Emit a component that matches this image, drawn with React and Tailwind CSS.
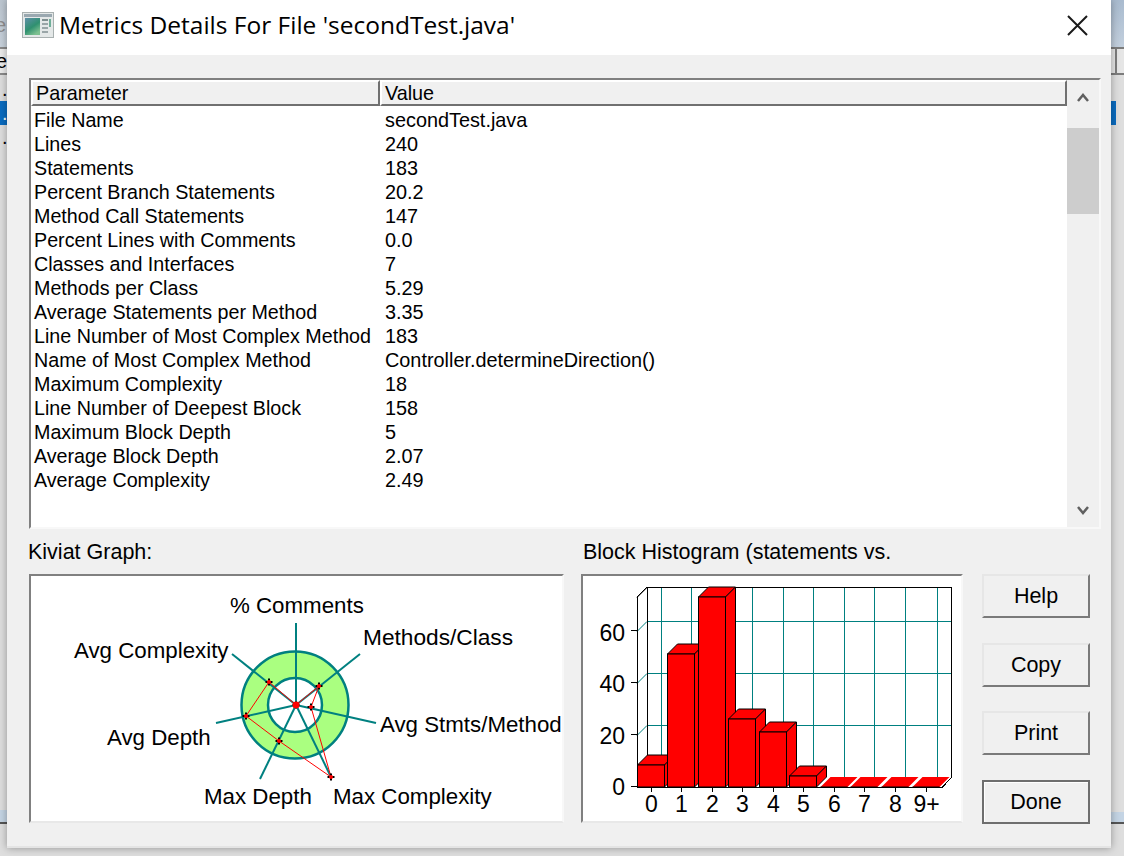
const ROWS = [
  ['File Name', 'secondTest.java'],
  ['Lines', '240'],
  ['Statements', '183'],
  ['Percent Branch Statements', '20.2'],
  ['Method Call Statements', '147'],
  ['Percent Lines with Comments', '0.0'],
  ['Classes and Interfaces', '7'],
  ['Methods per Class', '5.29'],
  ['Average Statements per Method', '3.35'],
  ['Line Number of Most Complex Method', '183'],
  ['Name of Most Complex Method', 'Controller.determineDirection()'],
  ['Maximum Complexity', '18'],
  ['Line Number of Deepest Block', '158'],
  ['Maximum Block Depth', '5'],
  ['Average Block Depth', '2.07'],
  ['Average Complexity', '2.49'],
];

const SPOKES = [[296, 623], [360, 654], [376, 723], [331, 777], [260, 779], [216, 723], [232, 654]];
const POINTS = [[296, 705], [319, 686], [311, 707], [331, 777], [279, 741], [246, 716], [269, 682]];
const KIVIAT_LABELS = [
  ['% Comments', 230, 613],
  ['Methods/Class', 363, 645, 22.7],
  ['Avg Stmts/Method', 380, 732],
  ['Max Complexity', 333, 804],
  ['Max Depth', 204, 804],
  ['Avg Depth', 107, 745],
  ['Avg Complexity', 74, 658],
];

const BARS = [
  { label: '0', x: 637.5, top: 765 },
  { label: '1', x: 667.5, top: 654 },
  { label: '2', x: 698.5, top: 597 },
  { label: '3', x: 728.5, top: 719 },
  { label: '4', x: 759.5, top: 732 },
  { label: '5', x: 789.5, top: 776 },
  { label: '6', x: 820.5, top: 787 },
  { label: '7', x: 850.5, top: 787 },
  { label: '8', x: 881.5, top: 787 },
  { label: '9+', x: 912.5, top: 787 },
];
const GRID_X = [661, 691, 752, 783, 813, 844, 874, 905, 937];
const GRID_Y = [621.5, 673.5, 725.5];
const TICKS = [['60', 631, 641], ['40', 683, 692], ['20', 735, 743.5], ['0', 787, 795]];

const FONT = { fontFamily: '"Liberation Sans", Arial, sans-serif' };

function WindowIcon() {
  return (
    <svg width="32" height="26" viewBox="0 0 32 26">
      <defs>
        <linearGradient id="pane" x1="0" y1="0" x2="0.6" y2="1">
          <stop offset="0" stopColor="#5f8fa8" />
          <stop offset="0.6" stopColor="#2f9070" />
          <stop offset="1" stopColor="#7cc090" />
        </linearGradient>
      </defs>
      <rect x="0.5" y="0.5" width="31" height="25" fill="#e4e8e8" stroke="#a8b0b0" />
      <rect x="2" y="2" width="28" height="3" fill="#9aa8b0" />
      <rect x="3" y="6" width="15" height="17" fill="url(#pane)" />
      <rect x="20" y="7" width="6" height="2" fill="#7f8f90" />
      <rect x="20" y="11" width="6" height="2" fill="#9aa6a8" />
      <rect x="20" y="15" width="6" height="2" fill="#9aa6a8" />
      <rect x="20" y="19" width="6" height="2" fill="#9aa6a8" />
      <rect x="27" y="7" width="2" height="8" fill="#6fae98" />
    </svg>
  );
}

function KiviatGraph() {
  return (
    <svg className="block" width="531" height="245" viewBox="31 576 531 245">
      <circle cx="295" cy="705" r="53.5" fill="#aaff80" stroke="#008080" strokeWidth="2.5" />
      <circle cx="295" cy="705" r="27" fill="#ffffff" stroke="#008080" strokeWidth="2.5" />
      {SPOKES.map(([x, y]) => (
        <line key={x} x1="296" y1="705" x2={x} y2={y} stroke="#008080" strokeWidth="2" />
      ))}
      <polygon points={POINTS.map(p => p.join(',')).join(' ')} fill="none" stroke="#ff0000" strokeWidth="1" />
      {POINTS.map(([x, y]) => (
        <g key={x}>
          <path d={`M${x - 3.5} ${y}H${x + 3.5}M${x} ${y - 3.5}V${y + 3.5}`} stroke="#000000" strokeWidth="2" />
          <circle cx={x} cy={y} r="2" fill="#ff0000" />
        </g>
      ))}
      <circle cx="296" cy="705" r="3.5" fill="#ff0000" />
      {KIVIAT_LABELS.map(([text, x, y, size]) => (
        <text key={text} x={x} y={y} fontSize={size || 22.3} fill="#000000" style={FONT}>{text}</text>
      ))}
    </svg>
  );
}

function Histogram() {
  return (
    <svg className="block" width="378" height="245" viewBox="583 576 378 245" shapeRendering="crispEdges">
      {GRID_X.map(x => <line key={x} x1={x} y1="587" x2={x} y2="777" stroke="#008080" />)}
      {GRID_Y.map(y => <line key={y} x1="647" y1={y} x2="951" y2={y} stroke="#008080" />)}
      {GRID_Y.map(y => <line key={y} x1="637" y1={y + 10} x2="647" y2={y} stroke="#008080" shapeRendering="auto" />)}
      <path d="M647 587.5H951.5V777M647 587V777M637 597L647 587M637 787.5H942L952 777M637 597V787" fill="none" stroke="#000000" />
      <path d="M637 597.5L647 587.5" stroke="#000000" shapeRendering="auto" />
      {BARS.map(({ label, x, top }) => {
        const w = 27;
        const flat = top === 787;
        const d = 10;
        return (
          <g key={label} shapeRendering="auto">
            <polygon
              points={`${x},${top} ${x + d},${top - d} ${x + w + d},${top - d} ${x + w},${top}`}
              fill="#ff0000"
              stroke={flat ? 'none' : '#000000'}
            />
            {!flat && (
              <>
                <polygon
                  points={`${x + w},${top} ${x + w + d},${top - d} ${x + w + d},777 ${x + w},787`}
                  fill="#ff0000"
                  stroke="#000000"
                />
                <rect x={x} y={top} width={w} height={787 - top} fill="#ff0000" stroke="#000000" />
              </>
            )}
            {flat && <line x1={x} y1="787" x2={x + w} y2="787" stroke="#000000" />}
          </g>
        );
      })}
      {TICKS.map(([text, y]) => (
        <line key={text} x1="631" y1={y - 0.5} x2="637" y2={y - 0.5} stroke="#000000" />
      ))}
      {BARS.map(({ x }) => (
        <line key={x} x1={x + 13.5} y1="787" x2={x + 13.5} y2="792" stroke="#000000" />
      ))}
      {TICKS.map(([text, , baseline]) => (
        <text key={text} x="625" y={baseline} textAnchor="end" fontSize="23" fill="#000000" style={FONT}>{text}</text>
      ))}
      {BARS.map(({ label, x }) => (
        <text key={label} x={x + 14} y="812" textAnchor="middle" fontSize="23" fill="#000000" style={FONT}>{label}</text>
      ))}
    </svg>
  );
}

function DialogButton({ children, active, className }) {
  return (
    <div
      className={`flex h-11 w-[108px] items-center justify-center bg-[#f0f0f0] text-[21.5px] text-black ${className} ${
        active
          ? 'border-2 border-[#6e6e6e] shadow-[inset_1px_1px_0_#ffffff]'
          : 'border-2 border-t-[#e6e6e6] border-l-[#e6e6e6] border-r-[#7a7a7a] border-b-[#7a7a7a]'
      }`}
    >
      {children}
    </div>
  );
}

function LeftStrip() {
  return (
    <div className="flex h-[856px] w-[7px] shrink-0 flex-col overflow-hidden bg-[#dedede] text-[20px] leading-6">
      <div className="h-[47px] bg-gradient-to-b from-[#bcc6d0] to-[#c8d2dc] pt-[13px] -indent-[5px] text-[#8f8f8f]">e</div>
      <div className="h-[28px] border-y-2 border-[#8a8a8a] bg-[#ececec] -indent-[4px]">e</div>
      <div className="h-[26px] pl-[2px] pt-[2px]">.</div>
      <div className="h-6 bg-[#0a6cc0] pl-[2px] text-white">.</div>
      <div className="h-[685px] pl-[2px]">.</div>
      <div className="h-[14px] border-b-2 border-[#555555] bg-[#c4d4e4]" />
    </div>
  );
}

function RightStrip() {
  return (
    <div className="flex h-[856px] w-[13px] shrink-0 flex-col overflow-hidden bg-[#dedede]">
      <div className="h-[47px] bg-gradient-to-b from-[#a9bbcf] to-[#c2cfdd]" />
      <div className="h-[28px] border-y-2 border-[#7c7c7c] bg-[#e6e6e6]">
        <div className="h-full w-[6px] border-r-2 border-[#7c7c7c]" />
      </div>
      <div className="h-[26px]" />
      <div className="h-6 w-[5px] bg-[#0a6cc0]" />
      <div className="h-[687px]" />
      <div className="h-[12px] border-b-2 border-[#555555] bg-[#c4d4e4]" />
    </div>
  );
}

export default function App() {
  return (
    <div className="flex h-[856px] w-[1124px] overflow-hidden bg-[#dedede] text-black" style={FONT}>
      <LeftStrip />
      <div className="relative z-10 flex h-[848px] w-[1104px] shrink-0 flex-col border-b-2 border-[#e4e4e4] bg-[#f0f0f0] shadow-[0_0_8px_rgba(0,0,0,0.35)]">
        {/* title bar */}
        <div className="flex h-[55px] shrink-0 items-center bg-white pb-[5px] pl-[15px] pr-[23px]">
          <WindowIcon />
          <span className="ml-[5px] text-[24.5px] leading-none" style={{ fontFamily: '"Open Sans", sans-serif' }}>
            Metrics Details For File 'secondTest.java'
          </span>
          <svg className="ml-auto" width="21" height="21" viewBox="0 0 21 21">
            <path d="M1 1L20 20M20 1L1 20" stroke="#1a1a1a" strokeWidth="2" />
          </svg>
        </div>

        <div className="flex flex-col pl-[22px] pt-[23px]">
          {/* metrics table */}
          <div className="flex h-[451px] w-[1072px] border-2 border-t-[#808080] border-l-[#808080] border-r-[#f8f8f8] border-b-[#f8f8f8] bg-white">
            <div className="flex min-w-0 flex-1 flex-col">
              <div className="flex h-[26px] shrink-0 bg-[#f0f0f0] text-[19.8px] leading-[23px]">
                <div className="w-[349px] border-2 border-t-white border-l-white border-r-[#707070] border-b-[#707070] pl-[3px]">Parameter</div>
                <div className="flex-1 border-2 border-t-white border-l-white border-r-[#707070] border-b-[#707070] pl-[3px]">Value</div>
              </div>
              <div className="pt-[2px] pl-[3px] leading-6">
                {ROWS.map(([name, value]) => (
                  <div key={name} className="grid h-6 grid-cols-[351px_1fr] whitespace-nowrap">
                    <span className="text-[19.7px]">{name}</span>
                    <span className="text-[19.85px]">{value}</span>
                  </div>
                ))}
              </div>
            </div>
            <div className="flex w-[32px] shrink-0 flex-col bg-[#f0f0f0]">
              <div className="flex h-[48px] items-start justify-center pt-[13px]">
                <svg width="12" height="9" viewBox="0 0 12 9"><path d="M1 8L6 2L11 8" fill="none" stroke="#606060" strokeWidth="2.5" /></svg>
              </div>
              <div className="h-[86px] bg-[#cdcdcd]" />
              <div className="flex flex-1 items-end justify-center pb-[12px]">
                <svg width="12" height="9" viewBox="0 0 12 9"><path d="M1 1L6 7L11 1" fill="none" stroke="#606060" strokeWidth="2.5" /></svg>
              </div>
            </div>
          </div>

          {/* graphs and buttons */}
          <div className="mt-[9px] flex">
            <div className="flex w-[535px] flex-col">
              <div className="-ml-px h-[36px] text-[21.5px] leading-[28px]">Kiviat Graph:</div>
              <div className="h-[249px] border-2 border-t-[#808080] border-l-[#808080] border-r-[#f8f8f8] border-b-[#e8e8e8] bg-white">
                <KiviatGraph />
              </div>
            </div>
            <div className="ml-[17px] flex w-[382px] flex-col">
              <div className="h-[36px] whitespace-nowrap pl-[2px] text-[21.5px] leading-[28px]">Block Histogram (statements vs.</div>
              <div className="h-[249px] border-2 border-t-[#808080] border-l-[#808080] border-r-[#f8f8f8] border-b-[#e8e8e8] bg-white">
                <Histogram />
              </div>
            </div>
            <div className="ml-[19px] mt-[36px] flex flex-col">
              <DialogButton>Help</DialogButton>
              <DialogButton className="mt-[25px]">Copy</DialogButton>
              <DialogButton className="mt-[24px]">Print</DialogButton>
              <DialogButton className="mt-[25px]" active>Done</DialogButton>
            </div>
          </div>
        </div>
      </div>
      <RightStrip />
    </div>
  );
}
